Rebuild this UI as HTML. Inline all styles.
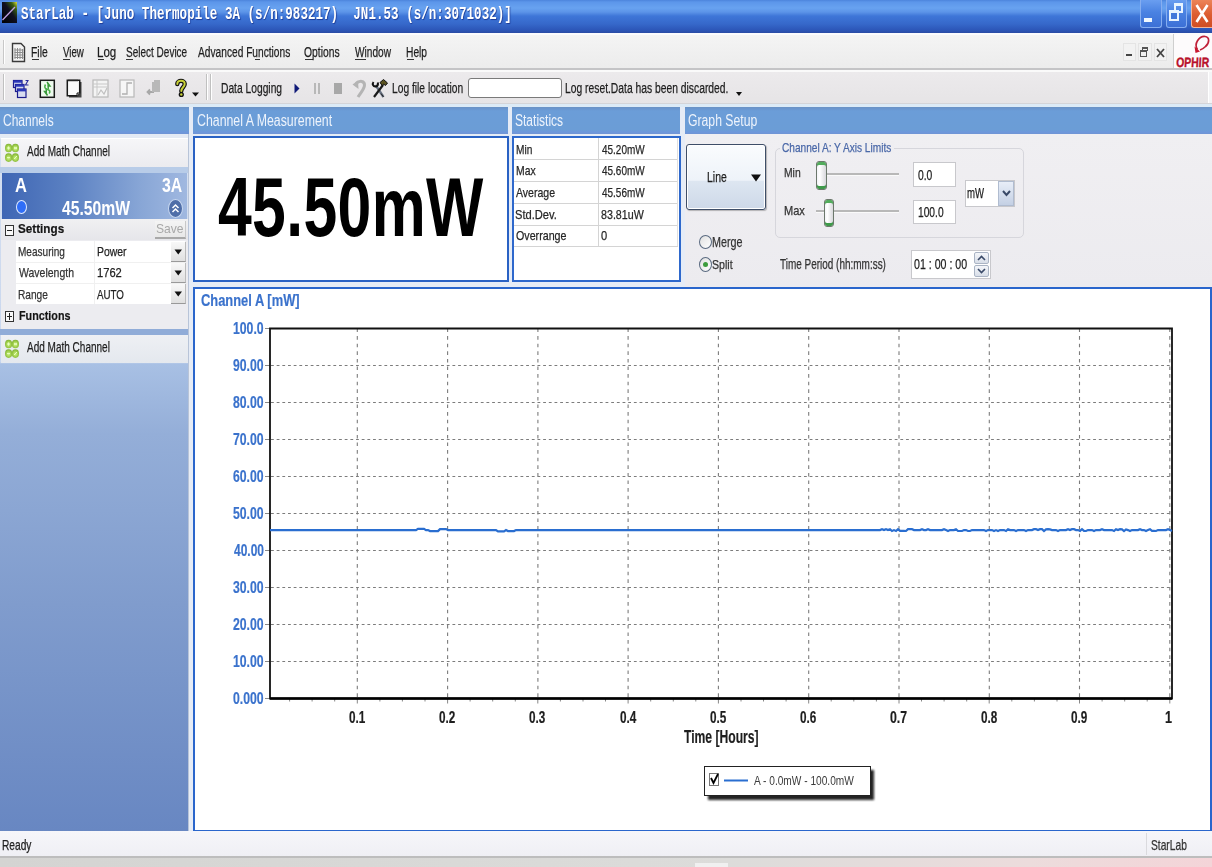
<!DOCTYPE html>
<html><head><meta charset="utf-8"><title>StarLab</title>
<style>
*{box-sizing:border-box;margin:0;padding:0}
html,body{width:1212px;height:867px;overflow:hidden;background:#ececf0;position:relative;font-family:"Liberation Sans",sans-serif}
.a{position:absolute}
.t{position:absolute;white-space:pre;transform-origin:0 0}
</style></head><body>
<!-- title bar -->
<div class="a" style="left:0;top:0;width:1212px;height:33px;background:linear-gradient(#4c84dc 0px,#5c96ea 2px,#68a2f0 8px,#5c94e8 12px,#3e76d8 16px,#3668ca 24px,#2c56b8 30px,#2a4ca4 33px)"></div>
<!-- app icon -->
<svg class="a" style="left:2px;top:2px" width="15" height="21" viewBox="0 0 15 21">
<defs><linearGradient id="ig" x1="0" y1="1" x2="1" y2="0"><stop offset="0" stop-color="#000"/><stop offset="0.55" stop-color="#101020"/><stop offset="0.8" stop-color="#3a6010"/><stop offset="1" stop-color="#e0e040"/></linearGradient></defs>
<rect x="0" y="0" width="15" height="21" fill="url(#ig)"/>
<line x1="0.5" y1="18" x2="13" y2="5" stroke="#c0a0e0" stroke-width="1.3"/>
</svg>
<!-- caption buttons -->
<div class="a" style="left:1140px;top:0px;width:22px;height:28px;border:1px solid #86aef0;border-top:none;border-radius:0 0 3px 3px;background:linear-gradient(#6a9ef0,#4a82e2 45%,#3c70d6)"></div>
<div class="a" style="left:1144px;top:18px;width:8px;height:4px;background:#f0f8ff"></div>
<div class="a" style="left:1166px;top:0px;width:21px;height:28px;border:1px solid #86aef0;border-top:none;border-radius:0 0 3px 3px;background:linear-gradient(#6a9ef0,#4a82e2 45%,#3c70d6)"></div>
<div class="a" style="left:1174px;top:3px;width:9px;height:10px;border:2px solid #e8f4ff;border-top-width:3px"></div>
<div class="a" style="left:1169px;top:10px;width:10px;height:11px;border:2px solid #e8f4ff;border-top-width:3px;background:#4278da"></div>
<div class="a" style="left:1191px;top:0px;width:21px;height:28px;border-left:1px solid #f4b498;border-bottom:1px solid #f4b498;border-radius:0 0 0 3px;background:linear-gradient(#ec8458,#dc5c30 55%,#d04e24)"></div>
<svg class="a" style="left:1194px;top:3px" width="16" height="21"><path d="M2.5 2 L13.5 19 M13.5 2 L2.5 19" stroke="#fff" stroke-width="2.6"/></svg>
<!-- white separator -->
<div class="a" style="left:0;top:33px;width:1212px;height:2px;background:#fbfbfd"></div>
<!-- menu bar -->
<div class="a" style="left:0;top:35px;width:1212px;height:33px;background:linear-gradient(#f4f4f4,#ececec)"></div>
<div class="a" style="left:3px;top:40px;width:2px;height:24px;border-left:1px solid #c8c8c8;border-right:1px solid #fff"></div>
<!-- menu doc icon -->
<svg class="a" style="left:11px;top:42px" width="15" height="21" viewBox="0 0 15 21">
<path d="M1.5 1.5 H10 L13.5 5 V19.5 H1.5 Z" fill="#f4f4f4" stroke="#3a3a3a" stroke-width="1.4"/>
<g stroke="#8c8c8c" stroke-width="1"><path d="M4 6v11M6.5 6v11M9 6v11M11.5 7v10M3.5 8h9M3.5 10.5h9M3.5 13h9M3.5 15.5h9"/></g>
</svg>
<!-- menu underlines -->
<div class="a" style="left:32px;top:59px;width:7px;height:1px;background:#333"></div>
<div class="a" style="left:63px;top:59px;width:7px;height:1px;background:#333"></div>
<div class="a" style="left:98px;top:59px;width:6px;height:1px;background:#333"></div>
<div class="a" style="left:126px;top:59px;width:7px;height:1px;background:#333"></div>
<div class="a" style="left:255px;top:59px;width:5px;height:1px;background:#333"></div>
<div class="a" style="left:305px;top:59px;width:8px;height:1px;background:#333"></div>
<div class="a" style="left:355px;top:59px;width:11px;height:1px;background:#333"></div>
<div class="a" style="left:407px;top:59px;width:7px;height:1px;background:#333"></div>
<!-- MDI buttons -->
<div class="a" style="left:1123px;top:43px;width:13px;height:18px;background:#f2f2f2;border:1px solid #e4e4e4"></div>
<div class="a" style="left:1126px;top:54px;width:6px;height:2px;background:#444"></div>
<div class="a" style="left:1138px;top:43px;width:14px;height:18px;background:#f2f2f2;border:1px solid #e4e4e4"></div>
<div class="a" style="left:1142px;top:47px;width:6px;height:4px;border:1px solid #555;border-top-width:2px"></div>
<div class="a" style="left:1140px;top:50px;width:7px;height:7px;border:1px solid #555;border-top-width:2px;background:#f2f2f2"></div>
<div class="a" style="left:1154px;top:43px;width:13px;height:18px;background:#f2f2f2;border:1px solid #e4e4e4"></div>
<svg class="a" style="left:1155px;top:47px" width="11" height="12"><path d="M2 2 L9 10 M9 2 L2 10" stroke="#444" stroke-width="1.8"/></svg>
<!-- OPHIR logo -->
<div class="a" style="left:1173px;top:34px;width:39px;height:35px;background:#fdfbfc;border-left:1px solid #cfcfcf"></div>
<svg class="a" style="left:1174px;top:33px" width="38" height="36" viewBox="0 0 38 36">
<path d="M23.5 16.5 C19.5 11 25 3 31 3.5 C36 4 35.5 10 31.5 13.5 C29.5 15.5 27.5 16.5 26 17" fill="none" stroke="#c02038" stroke-width="1.7"/>
<path d="M20.5 13.5 L26 18.5 L21.5 20 Z" fill="#c81830"/>
<text x="2" y="34.5" font-family="Liberation Sans" font-weight="bold" font-size="13.5" fill="#b8102a" stroke="#b8102a" stroke-width="0.4" textLength="33" lengthAdjust="spacingAndGlyphs" transform="skewX(-3) translate(1.8,0)">OPHIR</text>
</svg>
<!-- menu/toolbar separator -->
<div class="a" style="left:0;top:68px;width:1212px;height:2px;background:#c4c4c6"></div>
<div class="a" style="left:0;top:70px;width:1212px;height:2px;background:#fafafa"></div>
<!-- toolbar -->
<div class="a" style="left:0;top:72px;width:1208px;height:32px;background:linear-gradient(#eceaec,#e6e4e6)"></div>
<div class="a" style="left:1208px;top:72px;width:4px;height:32px;background:#f4f4f6;border-left:1px solid #fff"></div>
<div class="a" style="left:3px;top:74px;width:2px;height:26px;border-left:1px solid #c0c0c0;border-right:1px solid #fff"></div>
<div class="a" style="left:206px;top:74px;width:2px;height:26px;border-left:1px solid #c0c0c0;border-right:1px solid #fff"></div>
<div class="a" style="left:210px;top:74px;width:2px;height:26px;border-left:1px solid #c0c0c0;border-right:1px solid #fff"></div>

<svg class="a" style="left:12px;top:79px" width="18" height="20" viewBox="0 0 18 20">
<rect x="1.5" y="1.5" width="8.5" height="7" fill="#d0d6f0" stroke="#1c1c8c" stroke-width="1.2"/><rect x="1.5" y="1.5" width="8.5" height="2.2" fill="#2a36b8"/>
<rect x="3.5" y="5.5" width="8.5" height="7" fill="#d0d6f0" stroke="#1c1c8c" stroke-width="1.2"/><rect x="3.5" y="5.5" width="8.5" height="2.2" fill="#2a36b8"/>
<rect x="5.5" y="10" width="8.5" height="8.5" fill="#d8dcf0" stroke="#1c1c8c" stroke-width="1.2"/><rect x="5.5" y="10" width="8.5" height="2.4" fill="#2a36b8"/>
<path d="M13.5 1.5 H16 L13.5 6 H16.5" stroke="#2a2a9a" fill="none" stroke-width="1.1"/>
</svg>
<svg class="a" style="left:39px;top:79px" width="17" height="20" viewBox="0 0 17 20">
<rect x="1.3" y="1.3" width="14" height="17" fill="#eefaee" stroke="#1a1a1a" stroke-width="1.5"/>
<path d="M8 3 L11 7 H9.2 V10" stroke="#3a9a3a" fill="#3a9a3a" stroke-width="1.4"/>
<path d="M8.5 16.5 L5.5 12.5 H7.3 V9.5" stroke="#3a9a3a" fill="#3a9a3a" stroke-width="1.4"/>
<path d="M6.5 5.5 C5 8 6 10 8.5 10.5 C11 11 11.5 13 10 14.5" stroke="#4ab04a" fill="none" stroke-width="1.6"/>
</svg>
<svg class="a" style="left:66px;top:78px" width="17" height="21" viewBox="0 0 17 21">
<path d="M3 4 H15.5 V19.5 H3 Z" fill="#444"/>
<path d="M1.3 2.3 H13.7 V15 L11 17.7 H1.3 Z" fill="#fafafa" stroke="#1a1a1a" stroke-width="1.5"/>
<path d="M11 17.7 V15 H13.7" fill="#ccc" stroke="#1a1a1a" stroke-width="1"/>
<path d="M3 1.5v2 M5 1.5v2 M7 1.5v2 M9 1.5v2 M11 1.5v2" stroke="#333" stroke-width="1"/>
</svg>
<svg class="a" style="left:92px;top:79px" width="17" height="19" viewBox="0 0 17 19">
<rect x="1" y="1" width="15" height="17" fill="#f4f4f4" stroke="#b8b8b8" stroke-width="1.2"/>
<path d="M1 5H16 M5 1V18 M1 8H16" stroke="#c8c8c8" stroke-width="1"/>
<path d="M6 16 L9 11 L12 15 L15 9" stroke="#c0c0c0" stroke-width="1.2" fill="none"/>
</svg>
<svg class="a" style="left:119px;top:79px" width="16" height="19" viewBox="0 0 16 19">
<rect x="1" y="1" width="14" height="17" fill="#f6f6f6" stroke="#b8b8b8" stroke-width="1.2"/>
<path d="M3 15 H8 V4 H13" stroke="#b0b0b0" stroke-width="1.3" fill="none"/>
</svg>
<svg class="a" style="left:145px;top:79px" width="17" height="19" viewBox="0 0 17 19">
<path d="M9 1 H15 V13 H9 Z" fill="#b8b8b8"/>
<path d="M9 13 H3 M5 10.5 L2.5 13 L5 15.5" stroke="#a8a8a8" stroke-width="1.8" fill="none"/>
<path d="M8 13 V3" stroke="#b8b8b8" stroke-width="2"/>
</svg>
<svg class="a" style="left:175px;top:78px" width="12" height="20" viewBox="0 0 12 20">
<path d="M2.3 6 C2.3 1.8 9.7 1.8 9.7 6 C9.7 9 6.3 9.5 6.3 13" stroke="#111" stroke-width="4.4" fill="none" stroke-linecap="round"/>
<path d="M2.3 6 C2.3 1.8 9.7 1.8 9.7 6 C9.7 9 6.3 9.5 6.3 13" stroke="#c8d038" stroke-width="2" fill="none" stroke-linecap="round"/>
<circle cx="6.3" cy="16.5" r="2.6" fill="#111"/><circle cx="6.3" cy="16.5" r="1.2" fill="#c8d038"/>
</svg>
<svg class="a" style="left:192px;top:92px" width="7" height="5"><path d="M0 0.5H7L3.5 4.5Z" fill="#111"/></svg>
<svg class="a" style="left:294px;top:83px" width="6" height="11"><path d="M0.5 0.5 L5.5 5.5 L0.5 10.5Z" fill="#101a78"/></svg>
<div class="a" style="left:314px;top:83px;width:2px;height:11px;background:#b8b8b8"></div>
<div class="a" style="left:318px;top:83px;width:2px;height:11px;background:#b8b8b8"></div>
<div class="a" style="left:334px;top:83px;width:8px;height:11px;background:#a8a8a8"></div>
<svg class="a" style="left:351px;top:78px" width="15" height="21" viewBox="0 0 15 21">
<path d="M5 5.5 C9 2 13.5 3 13.5 7 C13.5 11 10 14 7 19" stroke="#b4b4b4" stroke-width="3" fill="none"/>
<path d="M1.5 6.5 L7 2.5 L7.5 11 Z" fill="#b4b4b4"/>
</svg>
<svg class="a" style="left:371px;top:78px" width="18" height="21" viewBox="0 0 18 21">
<path d="M4.5 7 L12.5 19" stroke="#6a7484" stroke-width="2.4"/>
<path d="M12.5 19 L10 15.5" stroke="#222" stroke-width="1"/>
<path d="M2.5 4 C1 6 2 9 5 8.5 C7 8 7.5 6 6.5 4.5" stroke="#111" stroke-width="2" fill="none"/>
<path d="M3 19 L12 7" stroke="#1a1a1a" stroke-width="2.2"/>
<path d="M9 4.5 L12.5 1.5 L16.5 5 L14.5 7.5 L12.5 6 L11.5 8 Z" fill="#5c5420" stroke="#111" stroke-width="1"/>
</svg>
<div class="a" style="left:468px;top:78px;width:94px;height:20px;background:#fff;border:1px solid #7a7a7a;border-radius:3px"></div>
<svg class="a" style="left:736px;top:92px" width="6" height="4"><path d="M0 0H6L3 4Z" fill="#111"/></svg>

<!-- toolbar gap -->
<div class="a" style="left:0;top:103px;width:1212px;height:1px;background:#d4d4d8"></div>
<div class="a" style="left:0;top:104px;width:1212px;height:3px;background:#dceaf6"></div>
<!-- panel area bg -->
<div class="a" style="left:0;top:107px;width:1212px;height:724px;background:#e6ecf6"></div>
<!-- headers -->
<div class="a" style="left:0;top:107px;width:189px;height:27px;background:linear-gradient(#6a92c4 0px,#6a96d0 2px,#6b9dd8 4px,#6b9dd6 23px,#6e98dc 25px,#7094d4 27px)"></div>
<div class="a" style="left:193px;top:107px;width:315px;height:27px;background:linear-gradient(#6a92c4 0px,#6a96d0 2px,#6b9dd8 4px,#6b9dd6 23px,#6e98dc 25px,#7094d4 27px)"></div>
<div class="a" style="left:512px;top:107px;width:168px;height:27px;background:linear-gradient(#6a92c4 0px,#6a96d0 2px,#6b9dd8 4px,#6b9dd6 23px,#6e98dc 25px,#7094d4 27px)"></div>
<div class="a" style="left:685px;top:107px;width:527px;height:27px;background:linear-gradient(#6a92c4 0px,#6a96d0 2px,#6b9dd8 4px,#6b9dd6 23px,#6e98dc 25px,#7094d4 27px)"></div>
<!-- sidebar -->
<div class="a" style="left:0;top:134px;width:189px;height:697px;background:linear-gradient(#d6e0f0 0px,#c8d6ee 228px,#a8c0e4 230px,#94aed8 300px,#809ccd 470px,#6887c2 697px);border-right:1px solid #b8c4d8"></div>
<div class="a" style="left:0;top:134px;width:188px;height:5px;background:#e4eaf4"></div>
<div class="a" style="left:1px;top:138px;width:187px;height:29px;background:linear-gradient(#f6f6f8,#ebebef);border-top:1px solid #fff"></div>
<div class="a" style="left:0;top:167px;width:188px;height:6px;background:#b8cce8"></div>
<!-- channel box -->
<div class="a" style="left:2px;top:173px;width:185px;height:46px;background:linear-gradient(90deg,#3f66b4 0%,#5a80c2 35%,#88a6d6 75%,#a0b8e0 100%)"></div>
<div class="a" style="left:16px;top:200px;width:11px;height:14px;border-radius:50%;background:#2f6ef8;border:1.5px solid #dfeaff"></div>
<div class="a" style="left:168px;top:199px;width:15px;height:19px;border-radius:50%;background:#4f6ea8;border:1.5px solid #c8d8f0"></div>
<svg class="a" style="left:171px;top:202px" width="9" height="13"><path d="M1.5 6 L4.5 3 L7.5 6 M1.5 10 L4.5 7 L7.5 10" fill="none" stroke="#fff" stroke-width="1.5"/></svg>
<!-- settings section -->
<div class="a" style="left:1px;top:219px;width:187px;height:110px;background:#ececf0"></div>
<div class="a" style="left:1px;top:219px;width:187px;height:21px;background:linear-gradient(#f0f0f2,#e6e6ea)"></div>
<div class="a" style="left:5px;top:225px;width:9px;height:11px;border:1px solid #333;background:#f8f8f8"></div>
<div class="a" style="left:7px;top:230px;width:5px;height:1px;background:#222"></div>
<div class="a" style="left:155px;top:221px;width:31px;height:18px;background:linear-gradient(#f4f4f4,#e8e8e8);border-bottom:2px solid #a8a8a8;border-right:1px solid #c8c8c8"></div>
<!-- table -->
<div class="a" style="left:16px;top:241px;width:169px;height:63px;background:#fff"></div>
<div class="a" style="left:16px;top:262px;width:169px;height:1px;background:#f0f0f0"></div>
<div class="a" style="left:16px;top:283px;width:169px;height:1px;background:#f0f0f0"></div>
<div class="a" style="left:94px;top:241px;width:1px;height:63px;background:#f0f0f0"></div>
<div class="a" style="left:171px;top:242px;width:15px;height:20px;background:linear-gradient(#f8f8f8,#e0e0e0);border-bottom:1px solid #999;border-right:1px solid #bbb"></div>
<div class="a" style="left:171px;top:263px;width:15px;height:20px;background:linear-gradient(#f8f8f8,#e0e0e0);border-bottom:1px solid #999;border-right:1px solid #bbb"></div>
<div class="a" style="left:171px;top:284px;width:15px;height:20px;background:linear-gradient(#f8f8f8,#e0e0e0);border-bottom:1px solid #999;border-right:1px solid #bbb"></div>
<svg class="a" style="left:174px;top:249px" width="9" height="6"><path d="M0.5 0.5 H8 L4.25 5.5 Z" fill="#111"/></svg>
<svg class="a" style="left:174px;top:270px" width="9" height="6"><path d="M0.5 0.5 H8 L4.25 5.5 Z" fill="#111"/></svg>
<svg class="a" style="left:174px;top:291px" width="9" height="6"><path d="M0.5 0.5 H8 L4.25 5.5 Z" fill="#111"/></svg>
<!-- functions -->
<div class="a" style="left:5px;top:311px;width:9px;height:11px;border:1px solid #333;background:#f8f8f8"></div>
<div class="a" style="left:7px;top:316px;width:5px;height:1px;background:#222"></div>
<div class="a" style="left:9px;top:313px;width:1px;height:7px;background:#222"></div>
<div class="a" style="left:0;top:329px;width:188px;height:6px;background:#90acd8"></div>
<div class="a" style="left:1px;top:335px;width:187px;height:28px;background:linear-gradient(#eef0f4,#e4e8ee)"></div>
<svg class="a" style="left:4px;top:143px" width="16" height="20" viewBox="0 0 16 20">
<defs><radialGradient id="mg143" cx="0.5" cy="0.55" r="0.6"><stop offset="0" stop-color="#d0f488"/><stop offset="0.6" stop-color="#9ccc48"/><stop offset="1" stop-color="#78a830"/></radialGradient></defs>
<g fill="url(#mg143)"><ellipse cx="4.6" cy="5" rx="3.6" ry="4.3"/><ellipse cx="11.4" cy="5" rx="3.6" ry="4.3"/><ellipse cx="4.6" cy="14.6" rx="3.6" ry="4.3"/><ellipse cx="11.4" cy="14.6" rx="3.6" ry="4.3"/></g>
<g stroke="#e8ffc0" stroke-width="1" fill="none"><path d="M3 5h3M4.5 3.5v3M10 4l3 2M13 4l-3 2M3 14.6h3M10 16l3-3"/></g></svg><svg class="a" style="left:4px;top:339px" width="16" height="20" viewBox="0 0 16 20">
<defs><radialGradient id="mg339" cx="0.5" cy="0.55" r="0.6"><stop offset="0" stop-color="#d0f488"/><stop offset="0.6" stop-color="#9ccc48"/><stop offset="1" stop-color="#78a830"/></radialGradient></defs>
<g fill="url(#mg339)"><ellipse cx="4.6" cy="5" rx="3.6" ry="4.3"/><ellipse cx="11.4" cy="5" rx="3.6" ry="4.3"/><ellipse cx="4.6" cy="14.6" rx="3.6" ry="4.3"/><ellipse cx="11.4" cy="14.6" rx="3.6" ry="4.3"/></g>
<g stroke="#e8ffc0" stroke-width="1" fill="none"><path d="M3 5h3M4.5 3.5v3M10 4l3 2M13 4l-3 2M3 14.6h3M10 16l3-3"/></g></svg>
<!-- measurement box -->
<div class="a" style="left:193px;top:136px;width:316px;height:146px;background:#fff;border:2px solid #2a62c4"></div>
<!-- stats box -->
<div class="a" style="left:512px;top:136px;width:169px;height:146px;background:#fff;border:2px solid #2e68cc"></div>
<div class="a" style="left:514px;top:159px;width:164px;height:1px;background:#d4d4d4"></div>
<div class="a" style="left:514px;top:181px;width:164px;height:1px;background:#d4d4d4"></div>
<div class="a" style="left:514px;top:203px;width:164px;height:1px;background:#d4d4d4"></div>
<div class="a" style="left:514px;top:225px;width:164px;height:1px;background:#d4d4d4"></div>
<div class="a" style="left:514px;top:246px;width:164px;height:1px;background:#d4d4d4"></div>
<div class="a" style="left:598px;top:138px;width:1px;height:108px;background:#d4d4d4"></div>
<div class="a" style="left:677px;top:138px;width:1px;height:108px;background:#e0e0e0"></div>
<!-- graph setup body -->
<div class="a" style="left:685px;top:134px;width:527px;height:153px;background:linear-gradient(#f0eff2,#ecebef)"></div>
<div class="a" style="left:686px;top:144px;width:80px;height:66px;border:1px solid #3e4e68;border-radius:3px;background:linear-gradient(#fafcfe,#eef3f9 55%,#dde6f1 57%,#cdd8e8);box-shadow:inset 0 0 0 1px #fff,1px 1px 1px rgba(0,0,0,0.25)"></div>
<svg class="a" style="left:751px;top:174px" width="10" height="8"><path d="M0 0.5 H10 L5 7.5 Z" fill="#111"/></svg>
<div class="a" style="left:775px;top:148px;width:249px;height:90px;border:1px solid #d6d6dc;border-radius:5px"></div>
<div class="a" style="left:780px;top:141px;width:114px;height:12px;background:#efeef1"></div>
<!-- sliders -->
<div class="a" style="left:826px;top:173px;width:73px;height:3px;border-top:2px solid #b8b8b8;border-bottom:1px solid #fafafa"></div>
<div class="a" style="left:816px;top:161px;width:11px;height:29px;border:1px solid #6c786c;border-radius:3px;background:linear-gradient(90deg,#f4f4f8,#fff 30%,#d8d8dc);box-shadow:inset 0 3px 0 #52ac5c,inset 0 -3px 0 #3e9a4a"></div>
<div class="a" style="left:816px;top:210px;width:83px;height:3px;border-top:2px solid #b8b8b8;border-bottom:1px solid #fafafa"></div>
<div class="a" style="left:824px;top:199px;width:10px;height:28px;border:1px solid #6c786c;border-radius:3px;background:linear-gradient(90deg,#f4f4f8,#fff 30%,#d8d8dc);box-shadow:inset 0 3px 0 #52ac5c,inset 0 -3px 0 #3e9a4a"></div>
<!-- text boxes -->
<div class="a" style="left:913px;top:162px;width:43px;height:25px;background:#fff;border:1px solid #c8c8cc"></div>
<div class="a" style="left:913px;top:200px;width:43px;height:24px;background:#fff;border:1px solid #c8c8cc"></div>
<div class="a" style="left:965px;top:180px;width:50px;height:27px;background:#fff;border:1px solid #c8c8cc"></div>
<div class="a" style="left:998px;top:181px;width:16px;height:25px;background:linear-gradient(#e8eef8,#c4d0e4);border:1px solid #b0bcd0"></div>
<svg class="a" style="left:1002px;top:190px" width="9" height="7"><path d="M1 1 L4.5 5 L8 1" fill="none" stroke="#3a4a68" stroke-width="2"/></svg>
<!-- radios -->
<div class="a" style="left:699px;top:235px;width:13px;height:14px;border-radius:50%;border:1px solid #5a6a80;background:linear-gradient(135deg,#e0e0e0,#fff)"></div>
<div class="a" style="left:699px;top:257px;width:13px;height:15px;border-radius:50%;border:1px solid #5a6a80;background:linear-gradient(135deg,#e0e0e0,#fff)"></div>
<div class="a" style="left:703px;top:262px;width:5px;height:5px;border-radius:50%;background:#3c9c3c"></div>
<!-- time box -->
<div class="a" style="left:911px;top:250px;width:80px;height:29px;background:#fff;border:1px solid #c8c8cc"></div>
<div class="a" style="left:974px;top:252px;width:15px;height:12px;background:linear-gradient(#f4f6fa,#d8dee8);border:1px solid #aab4c4;border-radius:2px"></div>
<div class="a" style="left:974px;top:265px;width:15px;height:12px;background:linear-gradient(#f4f6fa,#d8dee8);border:1px solid #aab4c4;border-radius:2px"></div>
<svg class="a" style="left:977px;top:255px" width="9" height="6"><path d="M1 5 L4.5 1.5 L8 5" fill="none" stroke="#3a4a68" stroke-width="1.6"/></svg>
<svg class="a" style="left:977px;top:268px" width="9" height="6"><path d="M1 1 L4.5 4.5 L8 1" fill="none" stroke="#3a4a68" stroke-width="1.6"/></svg>
<!-- chart box -->
<div class="a" style="left:193px;top:287px;width:1019px;height:545px;background:#fff;border:2.5px solid #2a66cc;border-right-width:2px"></div>
<svg class="a" style="left:0;top:0" width="1212" height="867">
<rect x="270" y="328.5" width="902" height="370.0" fill="#ffffff"/>
<path d="M271 365.5H1172 M271 402.5H1172 M271 439.5H1172 M271 476.5H1172 M271 513.5H1172 M271 550.5H1172 M271 587.5H1172 M271 624.5H1172 M271 661.5H1172" stroke="#7c7c7c" stroke-width="1.1" stroke-dasharray="2.8 2.87" fill="none"/>
<path d="M357.3 328.5V698.5 M447.6 328.5V698.5 M537.9 328.5V698.5 M628.1 328.5V698.5 M718.4 328.5V698.5 M808.7 328.5V698.5 M899.0 328.5V698.5 M989.3 328.5V698.5 M1079.5 328.5V698.5 M1169.8 328.5V698.5" stroke="#7c7c7c" stroke-width="1.1" stroke-dasharray="3.6 4" fill="none"/>
<path d="M265 328.5H270 M265 365.5H270 M265 402.5H270 M265 439.5H270 M265 476.5H270 M265 513.5H270 M265 550.5H270 M265 587.5H270 M265 624.5H270 M265 661.5H270 M265 698.5H270 M289.6 698.5V701.5 M312.1 698.5V701.5 M334.7 698.5V701.5 M357.3 698.5V703.5 M379.9 698.5V701.5 M402.4 698.5V701.5 M425.0 698.5V701.5 M447.6 698.5V703.5 M470.1 698.5V701.5 M492.7 698.5V701.5 M515.3 698.5V701.5 M537.8 698.5V703.5 M560.4 698.5V701.5 M583.0 698.5V701.5 M605.5 698.5V701.5 M628.1 698.5V703.5 M650.7 698.5V701.5 M673.3 698.5V701.5 M695.8 698.5V701.5 M718.4 698.5V703.5 M741.0 698.5V701.5 M763.5 698.5V701.5 M786.1 698.5V701.5 M808.7 698.5V703.5 M831.2 698.5V701.5 M853.8 698.5V701.5 M876.4 698.5V701.5 M899.0 698.5V703.5 M921.5 698.5V701.5 M944.1 698.5V701.5 M966.7 698.5V701.5 M989.2 698.5V703.5 M1011.8 698.5V701.5 M1034.4 698.5V701.5 M1057.0 698.5V701.5 M1079.5 698.5V703.5 M1102.1 698.5V701.5 M1124.7 698.5V701.5 M1147.2 698.5V701.5 M1169.8 698.5V703.5" stroke="#888" stroke-width="1" fill="none"/>
<path d="M270 328.5V698.5H1172V328.5Z" stroke="#111" stroke-width="1.8" fill="none"/>
<path d="M270 698.5H1172" stroke="#000" stroke-width="2.6" fill="none"/>
<polyline points="270,530.1 272,530.1 274,530.1 276,530.1 278,530.1 280,530.1 282,530.1 284,530.1 286,530.1 288,530.1 290,530.1 292,530.1 294,530.1 296,530.1 298,530.1 300,530.1 302,530.1 304,530.1 306,530.1 308,530.1 310,530.1 312,530.1 314,530.1 316,530.1 318,530.1 320,530.1 322,530.1 324,530.1 326,530.1 328,530.1 330,530.1 332,530.1 334,530.1 336,530.1 338,530.1 340,530.1 342,530.1 344,530.1 346,530.1 348,530.1 350,530.1 352,530.1 354,530.1 356,530.1 358,530.1 360,530.1 362,530.1 364,530.1 366,530.1 368,530.1 370,530.1 372,530.1 374,530.1 376,530.1 378,530.1 380,530.1 382,530.1 384,530.1 386,530.1 388,530.1 390,530.1 392,530.1 394,530.1 396,530.1 398,530.1 400,530.1 402,530.1 404,530.1 406,530.1 408,530.1 410,530.1 412,530.1 414,530.1 416,530.1 418,528.9 420,528.9 422,528.9 424,528.9 426,530.1 428,530.1 430,531.1 432,531.1 434,531.1 436,531.1 438,531.1 440,529.1 442,529.1 444,529.1 446,529.1 448,530.1 450,530.1 452,530.1 454,530.1 456,530.1 458,530.1 460,530.1 462,530.1 464,530.1 466,530.1 468,530.1 470,530.1 472,530.1 474,530.1 476,530.1 478,530.1 480,530.1 482,530.1 484,530.1 486,530.1 488,530.1 490,530.1 492,530.1 494,530.1 496,530.1 498,531.4 500,531.4 502,531.4 504,531.4 506,530.1 508,531.1 510,531.1 512,531.1 514,531.1 516,530.1 518,530.1 520,530.1 522,530.1 524,530.1 526,530.1 528,530.1 530,530.1 532,530.1 534,530.1 536,530.1 538,530.1 540,530.1 542,530.1 544,530.1 546,530.1 548,530.1 550,530.1 552,530.1 554,530.1 556,530.1 558,530.1 560,530.1 562,530.1 564,530.1 566,530.1 568,530.1 570,530.1 572,530.1 574,530.1 576,530.1 578,530.1 580,530.1 582,530.1 584,530.1 586,530.1 588,530.1 590,530.1 592,530.1 594,530.1 596,530.1 598,530.1 600,530.1 602,530.1 604,530.1 606,530.1 608,530.1 610,530.1 612,530.1 614,530.1 616,530.1 618,530.1 620,530.1 622,530.1 624,530.1 626,530.1 628,530.1 630,530.1 632,530.1 634,530.1 636,530.1 638,530.1 640,530.1 642,530.1 644,530.1 646,530.1 648,530.1 650,530.1 652,530.1 654,530.1 656,530.1 658,530.1 660,530.1 662,530.1 664,530.1 666,530.1 668,530.1 670,530.1 672,530.1 674,530.1 676,530.1 678,530.1 680,530.1 682,530.1 684,530.1 686,530.1 688,530.1 690,530.1 692,530.1 694,530.1 696,530.1 698,530.1 700,530.1 702,530.1 704,530.1 706,530.1 708,530.1 710,530.1 712,530.1 714,530.1 716,530.1 718,530.1 720,530.1 722,530.1 724,530.1 726,530.1 728,530.1 730,530.1 732,530.1 734,530.1 736,530.1 738,530.1 740,530.1 742,530.1 744,530.1 746,530.1 748,530.1 750,530.1 752,530.1 754,530.1 756,530.1 758,530.1 760,530.1 762,530.1 764,530.1 766,530.1 768,530.1 770,530.1 772,530.1 774,530.1 776,530.1 778,530.1 780,530.1 782,530.1 784,530.1 786,530.1 788,530.1 790,530.1 792,530.1 794,530.1 796,530.1 798,530.1 800,530.1 802,530.1 804,530.1 806,530.1 808,530.1 810,530.1 812,530.1 814,530.1 816,530.1 818,530.1 820,530.1 822,530.1 824,530.1 826,530.1 828,530.1 830,530.1 832,530.1 834,530.1 836,530.1 838,530.1 840,530.1 842,530.1 844,530.1 846,530.1 848,530.1 850,530.1 852,530.1 854,530.1 856,530.1 858,530.1 860,530.1 862,530.1 864,530.1 866,530.1 868,530.1 870,530.1 872,530.1 874,530.1 876,530.1 878,530.1 880,530.1 882,529.2 884,530.1 886,529.2 888,530.1 890,529.2 892,531.0 894,530.1 896,531.0 898,529.2 900,530.9 902,530.9 904,530.9 906,531.0 908,529.2 910,529.2 912,529.2 914,530.1 916,530.1 918,530.1 920,530.1 922,529.2 924,530.1 926,530.1 928,529.2 930,530.1 932,530.1 934,530.1 936,530.1 938,530.1 940,530.1 942,530.1 944,529.2 946,530.1 948,531.0 950,530.1 952,530.1 954,530.1 956,529.2 958,531.0 960,531.0 962,531.0 964,530.1 966,530.1 968,531.0 970,531.0 972,530.1 974,530.1 976,530.1 978,530.1 980,530.1 982,530.1 984,530.1 986,531.0 988,530.1 990,530.1 992,530.1 994,531.0 996,530.1 998,531.0 1000,530.1 1002,530.1 1004,530.1 1006,531.0 1008,529.2 1010,530.1 1012,530.1 1014,530.1 1016,531.0 1018,530.1 1020,530.1 1022,530.1 1024,530.1 1026,531.0 1028,530.1 1030,530.1 1032,530.1 1034,529.2 1036,529.2 1038,530.1 1040,529.2 1042,529.2 1044,531.0 1046,529.4 1048,529.2 1050,529.4 1052,530.1 1054,530.1 1056,530.1 1058,531.0 1060,530.1 1062,530.1 1064,530.1 1066,530.1 1068,529.2 1070,530.1 1072,529.2 1074,529.2 1076,530.1 1078,530.1 1080,530.9 1082,529.2 1084,530.9 1086,531.0 1088,530.1 1090,530.1 1092,530.1 1094,531.0 1096,530.1 1098,530.1 1100,530.1 1102,529.2 1104,530.1 1106,530.1 1108,530.1 1110,530.1 1112,530.1 1114,531.0 1116,529.2 1118,530.1 1120,529.2 1122,529.4 1124,531.0 1126,529.4 1128,530.1 1130,531.0 1132,530.1 1134,530.1 1136,530.1 1138,530.1 1140,529.2 1142,530.1 1144,530.1 1146,531.0 1148,530.1 1150,529.2 1152,530.9 1154,530.9 1156,531.0 1158,530.1 1160,530.1 1162,530.1 1164,530.1 1166,530.1 1168,529.2 1170,530.1 1172,531.0" stroke="#2a6ed0" stroke-width="2.2" fill="none"/>
<rect x="708" y="770" width="166" height="30" fill="#111" opacity="0.9" filter="url(#bl)"/>
<defs><filter id="bl"><feGaussianBlur stdDeviation="1.2"/></filter></defs>
<rect x="704.5" y="766.5" width="166" height="29" fill="#fff" stroke="#222" stroke-width="1"/>
<rect x="709.5" y="773.5" width="9" height="12" fill="#fff" stroke="#777" stroke-width="1"/>
<path d="M711 778 L713.5 783 L718 774" stroke="#000" stroke-width="1.8" fill="none"/>
<path d="M724 780.5H748" stroke="#2a6ed0" stroke-width="2"/>
</svg>
<!-- status bar -->
<div class="a" style="left:0;top:831px;width:1212px;height:26px;background:linear-gradient(#f6f6fa,#efeff4)"></div>
<div class="a" style="left:1146px;top:833px;width:1px;height:22px;background:#dadade"></div>
<div class="a" style="left:0;top:856px;width:1212px;height:2px;background:#bdbdbd"></div>
<div class="a" style="left:0;top:858px;width:1212px;height:9px;background:linear-gradient(90deg,#d4d4d2 0%,#dcdcda 60%,#ecdcdc 85%,#f4d4d8 100%)"></div>
<div class="a" style="left:695px;top:863px;width:33px;height:4px;background:#f0f0f0"></div>
<div class="t" style="left:20.78px;top:5.64px;font-family:'Liberation Mono';font-weight:bold;font-size:17.58px;line-height:17.58px;color:#ffffff;transform:scaleX(0.7159);text-shadow:1px 1px 1px #1e3c96;">StarLab - [Juno Thermopile 3A (s/n:983217)  JN1.53 (s/n:3071032)]</div>
<div class="t" style="-webkit-text-stroke:0.25px #1e1e1e;left:31.28px;top:45.48px;font-family:'Liberation Sans';font-weight:normal;font-size:14.49px;line-height:14.49px;color:#1e1e1e;transform:scaleX(0.7182);">File</div>
<div class="t" style="-webkit-text-stroke:0.25px #1e1e1e;left:62.70px;top:45.48px;font-family:'Liberation Sans';font-weight:normal;font-size:14.49px;line-height:14.49px;color:#1e1e1e;transform:scaleX(0.6710);">View</div>
<div class="t" style="-webkit-text-stroke:0.25px #1e1e1e;left:97.20px;top:45.48px;font-family:'Liberation Sans';font-weight:normal;font-size:14.49px;line-height:14.49px;color:#1e1e1e;transform:scaleX(0.7955);">Log</div>
<div class="t" style="-webkit-text-stroke:0.25px #1e1e1e;left:125.71px;top:45.48px;font-family:'Liberation Sans';font-weight:normal;font-size:14.49px;line-height:14.49px;color:#1e1e1e;transform:scaleX(0.6908);">Select Device</div>
<div class="t" style="-webkit-text-stroke:0.25px #1e1e1e;left:198.30px;top:45.48px;font-family:'Liberation Sans';font-weight:normal;font-size:14.49px;line-height:14.49px;color:#1e1e1e;transform:scaleX(0.7031);">Advanced Functions</div>
<div class="t" style="-webkit-text-stroke:0.25px #1e1e1e;left:304.29px;top:45.48px;font-family:'Liberation Sans';font-weight:normal;font-size:14.49px;line-height:14.49px;color:#1e1e1e;transform:scaleX(0.7143);">Options</div>
<div class="t" style="-webkit-text-stroke:0.25px #1e1e1e;left:355.40px;top:45.48px;font-family:'Liberation Sans';font-weight:normal;font-size:14.49px;line-height:14.49px;color:#1e1e1e;transform:scaleX(0.6980);">Window</div>
<div class="t" style="-webkit-text-stroke:0.25px #1e1e1e;left:405.89px;top:45.48px;font-family:'Liberation Sans';font-weight:normal;font-size:14.49px;line-height:14.49px;color:#1e1e1e;transform:scaleX(0.7071);">Help</div>
<div class="t" style="-webkit-text-stroke:0.25px #1e1e1e;left:221.18px;top:81.00px;font-family:'Liberation Sans';font-weight:normal;font-size:14.35px;line-height:14.35px;color:#1e1e1e;transform:scaleX(0.7157);">Data Logging</div>
<div class="t" style="-webkit-text-stroke:0.25px #1e1e1e;left:392.09px;top:81.00px;font-family:'Liberation Sans';font-weight:normal;font-size:14.35px;line-height:14.35px;color:#1e1e1e;transform:scaleX(0.7143);">Log file location</div>
<div class="t" style="-webkit-text-stroke:0.25px #1e1e1e;left:565.28px;top:81.00px;font-family:'Liberation Sans';font-weight:normal;font-size:14.35px;line-height:14.35px;color:#1e1e1e;transform:scaleX(0.7191);">Log reset.Data has been discarded.</div>
<div class="t" style="left:2.94px;top:113.07px;font-family:'Liberation Sans';font-weight:normal;font-size:15.80px;line-height:15.80px;color:#eef4fc;transform:scaleX(0.7585);">Channels</div>
<div class="t" style="left:196.62px;top:113.07px;font-family:'Liberation Sans';font-weight:normal;font-size:15.80px;line-height:15.80px;color:#eef4fc;transform:scaleX(0.7808);">Channel A Measurement</div>
<div class="t" style="left:515.44px;top:113.07px;font-family:'Liberation Sans';font-weight:normal;font-size:15.80px;line-height:15.80px;color:#eef4fc;transform:scaleX(0.7613);">Statistics</div>
<div class="t" style="left:688.03px;top:113.07px;font-family:'Liberation Sans';font-weight:normal;font-size:15.80px;line-height:15.80px;color:#eef4fc;transform:scaleX(0.7727);">Graph Setup</div>
<div class="t" style="-webkit-text-stroke:0.25px #1e1e1e;left:26.70px;top:143.94px;font-family:'Liberation Sans';font-weight:normal;font-size:14.78px;line-height:14.78px;color:#1e1e1e;transform:scaleX(0.6793);">Add Math Channel</div>
<div class="t" style="left:14.85px;top:175.89px;font-family:'Liberation Sans';font-weight:bold;font-size:19.42px;line-height:19.42px;color:#ffffff;transform:scaleX(0.8500);">A</div>
<div class="t" style="left:162.18px;top:175.89px;font-family:'Liberation Sans';font-weight:bold;font-size:19.42px;line-height:19.42px;color:#ffffff;transform:scaleX(0.8174);">3A</div>
<div class="t" style="left:62.00px;top:198.62px;font-family:'Liberation Sans';font-weight:bold;font-size:19.86px;line-height:19.86px;color:#ffffff;transform:scaleX(0.7907);">45.50mW</div>
<div class="t" style="-webkit-text-stroke:0.2px #141414;left:17.94px;top:222.42px;font-family:'Liberation Sans';font-weight:bold;font-size:13.62px;line-height:13.62px;color:#141414;transform:scaleX(0.8596);">Settings</div>
<div class="t" style="left:155.81px;top:222.42px;font-family:'Liberation Sans';font-weight:normal;font-size:13.62px;line-height:13.62px;color:#a8a8a8;transform:scaleX(0.8900);">Save</div>
<div class="t" style="-webkit-text-stroke:0.25px #333;left:18.05px;top:245.04px;font-family:'Liberation Sans';font-weight:normal;font-size:13.48px;line-height:13.48px;color:#333;transform:scaleX(0.7459);">Measuring</div>
<div class="t" style="-webkit-text-stroke:0.25px #222;left:96.63px;top:245.04px;font-family:'Liberation Sans';font-weight:normal;font-size:13.48px;line-height:13.48px;color:#222;transform:scaleX(0.7730);">Power</div>
<div class="t" style="-webkit-text-stroke:0.25px #333;left:18.80px;top:266.14px;font-family:'Liberation Sans';font-weight:normal;font-size:13.48px;line-height:13.48px;color:#333;transform:scaleX(0.7786);">Wavelength</div>
<div class="t" style="-webkit-text-stroke:0.25px #222;left:96.57px;top:266.14px;font-family:'Liberation Sans';font-weight:normal;font-size:13.48px;line-height:13.48px;color:#222;transform:scaleX(0.8286);">1762</div>
<div class="t" style="-webkit-text-stroke:0.25px #333;left:18.05px;top:287.54px;font-family:'Liberation Sans';font-weight:normal;font-size:13.48px;line-height:13.48px;color:#333;transform:scaleX(0.7526);">Range</div>
<div class="t" style="-webkit-text-stroke:0.25px #222;left:97.40px;top:287.54px;font-family:'Liberation Sans';font-weight:normal;font-size:13.48px;line-height:13.48px;color:#222;transform:scaleX(0.7243);">AUTO</div>
<div class="t" style="-webkit-text-stroke:0.2px #141414;left:18.50px;top:309.34px;font-family:'Liberation Sans';font-weight:bold;font-size:13.48px;line-height:13.48px;color:#141414;transform:scaleX(0.8000);">Functions</div>
<div class="t" style="-webkit-text-stroke:0.25px #1e1e1e;left:26.50px;top:339.91px;font-family:'Liberation Sans';font-weight:normal;font-size:14.93px;line-height:14.93px;color:#1e1e1e;transform:scaleX(0.6707);">Add Math Channel</div>
<div class="t" style="left:217.78px;top:166.00px;font-family:'Liberation Sans';font-weight:bold;font-size:83.77px;line-height:83.77px;color:#000000;transform:scaleX(0.7250);letter-spacing:0.47px;">45.50mW</div>
<div class="t" style="-webkit-text-stroke:0.25px #262626;left:515.54px;top:142.67px;font-family:'Liberation Sans';font-weight:normal;font-size:13.33px;line-height:13.33px;color:#262626;transform:scaleX(0.7600);">Min</div>
<div class="t" style="-webkit-text-stroke:0.25px #262626;left:602.00px;top:142.67px;font-family:'Liberation Sans';font-weight:normal;font-size:13.33px;line-height:13.33px;color:#262626;transform:scaleX(0.7474);">45.20mW</div>
<div class="t" style="-webkit-text-stroke:0.25px #262626;left:515.52px;top:164.37px;font-family:'Liberation Sans';font-weight:normal;font-size:13.33px;line-height:13.33px;color:#262626;transform:scaleX(0.7792);">Max</div>
<div class="t" style="-webkit-text-stroke:0.25px #262626;left:602.00px;top:164.37px;font-family:'Liberation Sans';font-weight:normal;font-size:13.33px;line-height:13.33px;color:#262626;transform:scaleX(0.7474);">45.60mW</div>
<div class="t" style="-webkit-text-stroke:0.25px #262626;left:516.30px;top:186.07px;font-family:'Liberation Sans';font-weight:normal;font-size:13.33px;line-height:13.33px;color:#262626;transform:scaleX(0.7898);">Average</div>
<div class="t" style="-webkit-text-stroke:0.25px #262626;left:602.00px;top:186.07px;font-family:'Liberation Sans';font-weight:normal;font-size:13.33px;line-height:13.33px;color:#262626;transform:scaleX(0.7474);">45.56mW</div>
<div class="t" style="-webkit-text-stroke:0.25px #262626;left:515.46px;top:207.77px;font-family:'Liberation Sans';font-weight:normal;font-size:13.33px;line-height:13.33px;color:#262626;transform:scaleX(0.8354);">Std.Dev.</div>
<div class="t" style="-webkit-text-stroke:0.25px #262626;left:601.20px;top:207.77px;font-family:'Liberation Sans';font-weight:normal;font-size:13.33px;line-height:13.33px;color:#262626;transform:scaleX(0.8019);">83.81uW</div>
<div class="t" style="-webkit-text-stroke:0.25px #262626;left:515.50px;top:229.47px;font-family:'Liberation Sans';font-weight:normal;font-size:13.33px;line-height:13.33px;color:#262626;transform:scaleX(0.8016);">Overrange</div>
<div class="t" style="-webkit-text-stroke:0.25px #262626;left:601.17px;top:229.47px;font-family:'Liberation Sans';font-weight:normal;font-size:13.33px;line-height:13.33px;color:#262626;transform:scaleX(0.8333);">0</div>
<div class="t" style="-webkit-text-stroke:0.25px #1e1e1e;left:707.48px;top:169.68px;font-family:'Liberation Sans';font-weight:normal;font-size:14.49px;line-height:14.49px;color:#1e1e1e;transform:scaleX(0.7231);">Line</div>
<div class="t" style="-webkit-text-stroke:0.25px #4a68a8;left:782.01px;top:141.86px;font-family:'Liberation Sans';font-weight:normal;font-size:12.75px;line-height:12.75px;color:#4a68a8;transform:scaleX(0.7934);">Channel A: Y Axis Limits</div>
<div class="t" style="-webkit-text-stroke:0.25px #333;left:784.22px;top:166.19px;font-family:'Liberation Sans';font-weight:normal;font-size:13.19px;line-height:13.19px;color:#333;transform:scaleX(0.7850);">Min</div>
<div class="t" style="-webkit-text-stroke:0.25px #333;left:784.19px;top:204.42px;font-family:'Liberation Sans';font-weight:normal;font-size:13.62px;line-height:13.62px;color:#333;transform:scaleX(0.8125);">Max</div>
<div class="t" style="-webkit-text-stroke:0.25px #222;left:917.75px;top:168.80px;font-family:'Liberation Sans';font-weight:normal;font-size:13.77px;line-height:13.77px;color:#222;transform:scaleX(0.7500);">0.0</div>
<div class="t" style="-webkit-text-stroke:0.25px #222;left:917.76px;top:206.30px;font-family:'Liberation Sans';font-weight:normal;font-size:13.77px;line-height:13.77px;color:#222;transform:scaleX(0.7424);">100.0</div>
<div class="t" style="-webkit-text-stroke:0.25px #222;left:967.30px;top:186.80px;font-family:'Liberation Sans';font-weight:normal;font-size:13.77px;line-height:13.77px;color:#222;transform:scaleX(0.6957);">mW</div>
<div class="t" style="-webkit-text-stroke:0.25px #333;left:712.26px;top:234.98px;font-family:'Liberation Sans';font-weight:normal;font-size:14.49px;line-height:14.49px;color:#333;transform:scaleX(0.7436);">Merge</div>
<div class="t" style="-webkit-text-stroke:0.25px #333;left:712.21px;top:257.84px;font-family:'Liberation Sans';font-weight:normal;font-size:13.48px;line-height:13.48px;color:#333;transform:scaleX(0.7880);">Split</div>
<div class="t" style="-webkit-text-stroke:0.25px #333;left:779.70px;top:256.86px;font-family:'Liberation Sans';font-weight:normal;font-size:14.64px;line-height:14.64px;color:#333;transform:scaleX(0.6813);">Time Period (hh:mm:ss)</div>
<div class="t" style="-webkit-text-stroke:0.25px #222;left:913.77px;top:256.86px;font-family:'Liberation Sans';font-weight:normal;font-size:14.64px;line-height:14.64px;color:#222;transform:scaleX(0.7264);">01 : 00 : 00</div>
<div class="t" style="-webkit-text-stroke:0.2px #3a72cc;left:200.76px;top:292.02px;font-family:'Liberation Sans';font-weight:bold;font-size:17.39px;line-height:17.39px;color:#3a72cc;transform:scaleX(0.7420);">Channel A [mW]</div>
<div class="t" style="-webkit-text-stroke:0.2px #3a72cc;left:232.80px;top:319.72px;font-family:'Liberation Sans';font-weight:bold;font-size:17.39px;line-height:17.39px;color:#3a72cc;transform:scaleX(0.7048);">100.0</div>
<div class="t" style="-webkit-text-stroke:0.2px #3a72cc;left:232.80px;top:356.72px;font-family:'Liberation Sans';font-weight:bold;font-size:17.39px;line-height:17.39px;color:#3a72cc;transform:scaleX(0.7048);">90.00</div>
<div class="t" style="-webkit-text-stroke:0.2px #3a72cc;left:232.80px;top:393.72px;font-family:'Liberation Sans';font-weight:bold;font-size:17.39px;line-height:17.39px;color:#3a72cc;transform:scaleX(0.7048);">80.00</div>
<div class="t" style="-webkit-text-stroke:0.2px #3a72cc;left:232.80px;top:430.72px;font-family:'Liberation Sans';font-weight:bold;font-size:17.39px;line-height:17.39px;color:#3a72cc;transform:scaleX(0.7048);">70.00</div>
<div class="t" style="-webkit-text-stroke:0.2px #3a72cc;left:232.80px;top:467.72px;font-family:'Liberation Sans';font-weight:bold;font-size:17.39px;line-height:17.39px;color:#3a72cc;transform:scaleX(0.7048);">60.00</div>
<div class="t" style="-webkit-text-stroke:0.2px #3a72cc;left:232.80px;top:504.72px;font-family:'Liberation Sans';font-weight:bold;font-size:17.39px;line-height:17.39px;color:#3a72cc;transform:scaleX(0.7048);">50.00</div>
<div class="t" style="-webkit-text-stroke:0.2px #3a72cc;left:233.50px;top:541.72px;font-family:'Liberation Sans';font-weight:bold;font-size:17.39px;line-height:17.39px;color:#3a72cc;transform:scaleX(0.6884);">40.00</div>
<div class="t" style="-webkit-text-stroke:0.2px #3a72cc;left:232.80px;top:578.72px;font-family:'Liberation Sans';font-weight:bold;font-size:17.39px;line-height:17.39px;color:#3a72cc;transform:scaleX(0.7048);">30.00</div>
<div class="t" style="-webkit-text-stroke:0.2px #3a72cc;left:232.80px;top:615.72px;font-family:'Liberation Sans';font-weight:bold;font-size:17.39px;line-height:17.39px;color:#3a72cc;transform:scaleX(0.7048);">20.00</div>
<div class="t" style="-webkit-text-stroke:0.2px #3a72cc;left:232.80px;top:652.72px;font-family:'Liberation Sans';font-weight:bold;font-size:17.39px;line-height:17.39px;color:#3a72cc;transform:scaleX(0.7048);">10.00</div>
<div class="t" style="-webkit-text-stroke:0.2px #3a72cc;left:232.80px;top:689.72px;font-family:'Liberation Sans';font-weight:bold;font-size:17.39px;line-height:17.39px;color:#3a72cc;transform:scaleX(0.7048);">0.000</div>
<div class="t" style="-webkit-text-stroke:0.2px #1e1e1e;left:348.76px;top:710.37px;font-family:'Liberation Sans';font-weight:bold;font-size:15.80px;line-height:15.80px;color:#1e1e1e;transform:scaleX(0.7429);">0.1</div>
<div class="t" style="-webkit-text-stroke:0.2px #1e1e1e;left:439.04px;top:710.37px;font-family:'Liberation Sans';font-weight:bold;font-size:15.80px;line-height:15.80px;color:#1e1e1e;transform:scaleX(0.7429);">0.2</div>
<div class="t" style="-webkit-text-stroke:0.2px #1e1e1e;left:529.32px;top:710.37px;font-family:'Liberation Sans';font-weight:bold;font-size:15.80px;line-height:15.80px;color:#1e1e1e;transform:scaleX(0.7429);">0.3</div>
<div class="t" style="-webkit-text-stroke:0.2px #1e1e1e;left:619.60px;top:710.37px;font-family:'Liberation Sans';font-weight:bold;font-size:15.80px;line-height:15.80px;color:#1e1e1e;transform:scaleX(0.7429);">0.4</div>
<div class="t" style="-webkit-text-stroke:0.2px #1e1e1e;left:709.88px;top:710.37px;font-family:'Liberation Sans';font-weight:bold;font-size:15.80px;line-height:15.80px;color:#1e1e1e;transform:scaleX(0.7429);">0.5</div>
<div class="t" style="-webkit-text-stroke:0.2px #1e1e1e;left:800.16px;top:710.37px;font-family:'Liberation Sans';font-weight:bold;font-size:15.80px;line-height:15.80px;color:#1e1e1e;transform:scaleX(0.7429);">0.6</div>
<div class="t" style="-webkit-text-stroke:0.2px #1e1e1e;left:890.40px;top:710.37px;font-family:'Liberation Sans';font-weight:bold;font-size:15.80px;line-height:15.80px;color:#1e1e1e;transform:scaleX(0.7800);">0.7</div>
<div class="t" style="-webkit-text-stroke:0.2px #1e1e1e;left:980.72px;top:710.37px;font-family:'Liberation Sans';font-weight:bold;font-size:15.80px;line-height:15.80px;color:#1e1e1e;transform:scaleX(0.7429);">0.8</div>
<div class="t" style="-webkit-text-stroke:0.2px #1e1e1e;left:1071.00px;top:710.37px;font-family:'Liberation Sans';font-weight:bold;font-size:15.80px;line-height:15.80px;color:#1e1e1e;transform:scaleX(0.7429);">0.9</div>
<div class="t" style="-webkit-text-stroke:0.2px #1e1e1e;left:1165.20px;top:710.37px;font-family:'Liberation Sans';font-weight:bold;font-size:15.80px;line-height:15.80px;color:#1e1e1e;transform:scaleX(0.8000);">1</div>
<div class="t" style="-webkit-text-stroke:0.2px #1e1e1e;left:683.80px;top:728.84px;font-family:'Liberation Sans';font-weight:bold;font-size:17.83px;line-height:17.83px;color:#1e1e1e;transform:scaleX(0.6807);">Time [Hours]</div>
<div class="t" style="left:753.50px;top:774.04px;font-family:'Liberation Sans';font-weight:normal;font-size:13.48px;line-height:13.48px;color:#3a3a3a;transform:scaleX(0.7538);">A - 0.0mW - 100.0mW</div>
<div class="t" style="-webkit-text-stroke:0.25px #222;left:1.78px;top:837.93px;font-family:'Liberation Sans';font-weight:normal;font-size:14.20px;line-height:14.20px;color:#222;transform:scaleX(0.7175);">Ready</div>
<div class="t" style="-webkit-text-stroke:0.25px #333;left:1151.28px;top:837.93px;font-family:'Liberation Sans';font-weight:normal;font-size:14.20px;line-height:14.20px;color:#333;transform:scaleX(0.7208);">StarLab</div>
</body></html>
